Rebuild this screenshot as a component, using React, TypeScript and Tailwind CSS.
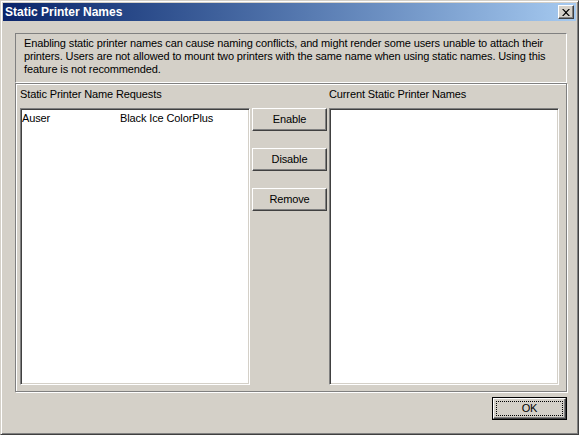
import React from 'react';

const font = { fontFamily: 'Tahoma, "Liberation Sans", Arial, sans-serif' };

function Button({ label, isDefault }: { label: string; isDefault?: boolean }) {
  if (isDefault) {
    return (
      <button className="w-[75px] h-[23px] border border-black bg-[#d4d0c8] p-0">
        <div className="w-full h-full border border-t-white border-l-white border-r-[#404040] border-b-[#404040] shadow-[inset_-1px_-1px_0_#808080] flex items-center justify-center p-[2px]">
          <div className="w-full h-full border border-dotted border-black flex items-center justify-center text-[11px] leading-none text-black">
            {label}
          </div>
        </div>
      </button>
    );
  }
  return (
    <button className="w-[75px] h-[23px] bg-[#d4d0c8] border border-t-white border-l-white border-r-[#404040] border-b-[#404040] shadow-[inset_-1px_-1px_0_#808080] text-[11px] leading-none text-black flex items-center justify-center">
      {label}
    </button>
  );
}

function ListBox({ children }: { children?: React.ReactNode }) {
  return (
    <div className="w-[230px] h-[277px] bg-white border border-t-[#808080] border-l-[#808080] border-r-white border-b-white shadow-[inset_1px_1px_0_#404040,inset_-1px_-1px_0_#d4d0c8] pt-[3px] px-[1px]">
      {children}
    </div>
  );
}

export default function App() {
  const requests = [{ user: 'Auser', printer: 'Black Ice ColorPlus' }];

  return (
    <div
      style={font}
      className="w-[579px] h-[435px] bg-[#d4d0c8] border border-t-[#d4d0c8] border-l-[#d4d0c8] border-r-[#404040] border-b-[#404040] shadow-[inset_1px_1px_0_#fff,inset_-1px_-1px_0_#808080] p-[2px] flex flex-col text-black tracking-[-0.12px]"
    >
      {/* title bar */}
      <div className="h-[18px] bg-gradient-to-r from-[#0a246a] to-[#a6caf0] flex items-center justify-between pl-[2px] pr-[2px]">
        <span className="text-white font-bold text-[12px] leading-none tracking-normal">Static Printer Names</span>
        <div className="w-[16px] h-[14px] bg-[#d4d0c8] border border-t-white border-l-white border-r-[#404040] border-b-[#404040] shadow-[inset_-1px_-1px_0_#808080] flex items-center justify-center">
          <svg width="8" height="7" viewBox="0 0 8 7">
            <path d="M0 0 L1.5 0 L4 2.5 L6.5 0 L8 0 L4.8 3.5 L8 7 L6.5 7 L4 4.5 L1.5 7 L0 7 L3.2 3.5 Z" fill="#000" />
          </svg>
        </div>
      </div>

      {/* body */}
      <div className="flex-1 flex flex-col pl-[12px] pr-[9px] pt-[12px]">
        <div className="h-[50px] border border-t-[#808080] border-l-[#808080] border-r-white border-b-white pl-[8px] pt-[3px] text-[11px] leading-[13px]">
          Enabling static printer names can cause naming conflicts, and might render some users unable to attach their
          <br />
          printers. Users are not allowed to mount two printers with the same name when using static names. Using this
          <br />
          feature is not recommended.
        </div>

        <div className="h-[309px] border border-[#808080] shadow-[inset_1px_1px_0_#fff,1px_1px_0_#fff] flex flex-col pl-[4px] pt-[4px]">
          <div className="flex text-[11px] leading-[13px] h-[20px]">
            <span className="w-[309px]">Static Printer Name Requests</span>
            <span>Current Static Printer Names</span>
          </div>
          <div className="flex gap-[2px]">
            <ListBox>
              {requests.map((r) => (
                <div key={r.user} className="flex text-[11px] leading-[13px]">
                  <span className="w-[98px]">{r.user}</span>
                  <span>{r.printer}</span>
                </div>
              ))}
            </ListBox>
            <div className="flex flex-col gap-[17px]">
              <Button label="Enable" />
              <Button label="Disable" />
              <Button label="Remove" />
            </div>
            <ListBox />
          </div>
        </div>

        <div className="flex justify-end pt-[5px]">
          <Button label="OK" isDefault />
        </div>
      </div>
    </div>
  );
}
